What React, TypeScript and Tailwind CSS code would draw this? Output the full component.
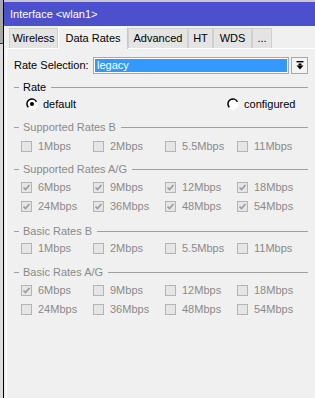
import React from "react";

const LINE = "bg-[#a0a0a0]";

function Heading({ label, enabled, mt }: { label: string; enabled?: boolean; mt: string }) {
  return (
    <div className={`flex items-center h-[14px] pr-[7px] pl-[7px] ${mt}`}>
      <div className={`w-[5px] h-px ${LINE}`} />
      <span className={`ml-[4px] leading-[14px] whitespace-nowrap ${enabled ? "text-black" : "text-[#8a8a8a]"}`}>{label}</span>
      <div className={`flex-1 h-px ml-[5px] ${LINE}`} />
    </div>
  );
}

function Check({ checked }: { checked?: boolean }) {
  return (
    <div className="w-[11px] h-[11px] border border-[#b4b4b4] bg-[#e6e6e6] flex items-center justify-center shrink-0">
      {checked && (
        <svg width="9" height="9" viewBox="0 0 9 9">
          <path d="M1.5 4.5 L3.5 6.5 L7.5 2" stroke="#9a9a9a" strokeWidth="1.6" fill="none" />
        </svg>
      )}
    </div>
  );
}

function Row({ items, mt }: { items: [string, boolean][]; mt: string }) {
  return (
    <div className={`flex h-[14px] pl-[14px] ${mt}`}>
      {items.map(([l, c]) => (
        <div key={l} className="w-[72px] flex items-center">
          <Check checked={c} />
          <span className="ml-[6px] leading-[14px] text-[#8a8a8a] whitespace-nowrap">{l}</span>
        </div>
      ))}
    </div>
  );
}

function Radio({ on }: { on?: boolean }) {
  return (
    <svg width="12" height="12" viewBox="0 0 12 12" className="shrink-0">
      <circle cx="6" cy="6" r="4.5" fill="#ffffff" />
      <path d="M10.5 3.9 A5 5 0 1 0 2.46 9.54" stroke="#000" strokeWidth="1.5" fill="none" />
      <path d="M2.46 9.54 A5 5 0 0 0 10.5 3.9" stroke="#ffffff" strokeWidth="1.5" fill="none" />
      {on && <circle cx="6" cy="6" r="2" fill="#000" />}
    </svg>
  );
}

const tabs: [string, number, boolean][] = [
  ["Wireless", 49, false],
  ["Data Rates", 70, true],
  ["Advanced", 60, false],
  ["HT", 25, false],
  ["WDS", 39, false],
  ["...", 20, false],
];

export default function App() {
  return (
    <div className="w-[315px] h-[398px] flex overflow-hidden font-['Liberation_Sans',Arial,sans-serif] text-[11px] bg-[#f0f0f0]">
      <div className="w-[3px] flex flex-col shrink-0">
        <div className="h-[43px] bg-[#a8a8a8]" />
        <div className="h-px bg-[#303030]" />
        <div className="flex-1 bg-[#dcdcdc]" />
      </div>
      <div className="w-px bg-black shrink-0" />
      <div className="flex-1 flex flex-col bg-[#f0f0f0] min-w-0">
        <div className="h-[2px] bg-[#c8c8c8]" />
        <div className="h-[24px] bg-[#4d50cc] flex items-center pl-[6px] text-white leading-none">
          <span className="text-[11px]">Interface &lt;wlan1&gt;</span>
        </div>
        <div className="h-[22px] flex items-end pl-[5px]">
          {tabs.map(([t, w, a]) => (
            <div
              key={t}
              style={{ width: w }}
              className={
                a
                  ? "h-[22px] bg-[#f0f0f0] border border-b-0 border-[#c8c8c8] border-t-white border-l-white flex items-center justify-center text-black relative -mb-px z-10"
                  : "h-[20px] bg-[#e4e4e4] border border-b-0 border-[#cfcfcf] flex items-center justify-center text-black"
              }
            >
              {t}
            </div>
          ))}
        </div>
        <div className="flex-1 ml-[2px] border-l border-t border-white pt-[8px] flex flex-col">
          <div className="flex items-center h-[17px] pl-[7px] pr-[7px]">
            <span className="w-[79px] text-black">Rate Selection:</span>
            <div className="flex-1 h-[17px] border border-[#a8a8a8] bg-white p-px">
              <div className="h-full bg-[#3399ff] text-white flex items-center pl-[2px]">legacy</div>
            </div>
            <div className="ml-[2px] w-[17px] h-[17px] border border-[#a8a8a8] bg-[#f4f4f4] flex items-center justify-center">
              <svg width="8" height="9" viewBox="0 0 8 9">
                <rect x="0.5" y="0" width="7" height="1.4" fill="#000" />
                <rect x="2.5" y="2.5" width="3" height="2" fill="#000" />
                <path d="M0.5 4.5 L7.5 4.5 L4 8.5 Z" fill="#000" />
              </svg>
            </div>
          </div>
          <Heading label="Rate" enabled mt="mt-[6px]" />
          <div className="flex items-center h-[14px] mt-[3px]">
            <div className="ml-[19px]"><Radio on /></div>
            <span className="ml-[5px] text-black leading-[14px]">default</span>
            <div className="ml-[151px]"><Radio /></div>
            <span className="ml-[5px] text-black leading-[14px]">configured</span>
          </div>
          <Heading label="Supported Rates B" mt="mt-[9px]" />
          <Row mt="mt-[5px]" items={[["1Mbps", false], ["2Mbps", false], ["5.5Mbps", false], ["11Mbps", false]]} />
          <Heading label="Supported Rates A/G" mt="mt-[9px]" />
          <Row mt="mt-[4px]" items={[["6Mbps", true], ["9Mbps", true], ["12Mbps", true], ["18Mbps", true]]} />
          <Row mt="mt-[5px]" items={[["24Mbps", true], ["36Mbps", true], ["48Mbps", true], ["54Mbps", true]]} />
          <Heading label="Basic Rates B" mt="mt-[11px]" />
          <Row mt="mt-[3px]" items={[["1Mbps", false], ["2Mbps", false], ["5.5Mbps", false], ["11Mbps", false]]} />
          <Heading label="Basic Rates A/G" mt="mt-[10px]" />
          <Row mt="mt-[4px]" items={[["6Mbps", true], ["9Mbps", false], ["12Mbps", false], ["18Mbps", false]]} />
          <Row mt="mt-[5px]" items={[["24Mbps", false], ["36Mbps", false], ["48Mbps", false], ["54Mbps", false]]} />
        </div>
      </div>
    </div>
  );
}
